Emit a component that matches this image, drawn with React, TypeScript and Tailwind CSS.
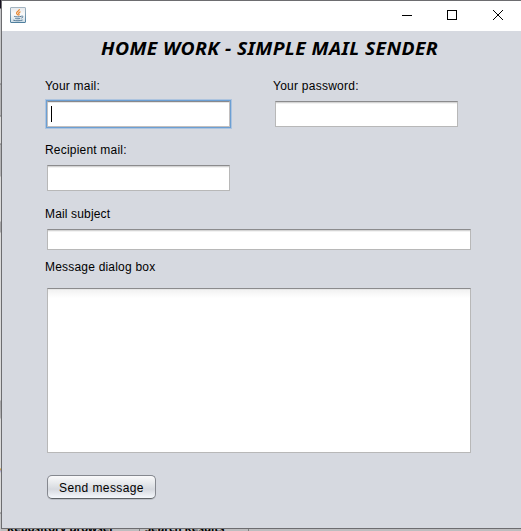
import type { ReactNode } from 'react';

function JavaIcon() {
  return (
    <svg width="16" height="16" viewBox="0 0 16 16" fill="none">
      <defs>
        <linearGradient id="tile" x1="0" y1="0" x2="0" y2="1">
          <stop offset="0" stopColor="#e6e9ec" />
          <stop offset="0.45" stopColor="#fafafa" />
          <stop offset="1" stopColor="#ccdce5" />
        </linearGradient>
        <linearGradient id="edge" x1="0" y1="0" x2="0" y2="1">
          <stop offset="0" stopColor="#a3b4c1" />
          <stop offset="1" stopColor="#4f7f9e" />
        </linearGradient>
      </defs>
      <rect x="0.5" y="0.5" width="15" height="15" rx="0.5" fill="url(#tile)" stroke="url(#edge)" />
      <path d="M9.3 2.2C9.8 4 6.2 4.6 6.6 6.3C6.8 7 7.7 7.3 7.7 8.2M10.5 4.8C8.8 5.4 8.2 6.2 9 7C9.4 7.5 9 8 8.5 8.5" stroke="#e98228" strokeWidth="1.2" />
      <path d="M4.2 9.4C6 10 9 10 11 9.4M5.3 11.4C7 11.9 9 11.9 10.2 11.4M3.3 13.2C6 14 10 14 12.6 13M11.2 9.2C13.6 8.6 13.5 10.6 11.3 11.1" stroke="#496f8e" strokeWidth="0.9" />
    </svg>
  );
}

function TitleBar() {
  return (
    <header className="flex h-[30px] shrink-0 items-start bg-white">
      <div className="ml-2 mt-1.5">
        <JavaIcon />
      </div>
      <svg className="ml-auto mr-[17px] mt-2" width="102" height="12" viewBox="0 0 102 12" fill="none" stroke="#000" shapeRendering="crispEdges">
        <path d="M0 6.5H10" />
        <rect x="45.5" y="1.5" width="9" height="9" />
        <path d="M91 1L101 11M101 1L91 11" shapeRendering="auto" />
      </svg>
    </header>
  );
}

function Label({ children, className }: { children: ReactNode; className: string }) {
  return <label className={`-ml-0.5 block h-4 whitespace-nowrap text-[12px] leading-[18px] ${className}`}>{children}</label>;
}

const field =
  'border border-[#b8b8b8] border-t-[#8b8b8d] bg-white shadow-[inset_0_1px_0_#d4d4d4,inset_0_2px_0_#f2f2f2]';

export default function App() {
  return (
    <div className="relative flex h-[531px] w-[521px] flex-col overflow-hidden bg-[#bdbdbf] font-['Liberation_Sans',Arial,sans-serif] text-black">
      <div className="absolute left-0 top-0 h-[531px] w-px bg-[linear-gradient(to_bottom,#171220_0px,#171220_8px,#c5c6c8_9px,#c5c6c8_83px,#77787a_84px,#b4b4b6_85px,#b4b4b6_115px,#77787a_116px,#dadada_117px,#dadada_143px,#77787a_144px,#b4b4b6_145px,#b4b4b6_176px,#dadada_177px,#dadada_221px,#a5a5a7_222px,#a5a5a7_232px,#dadada_233px,#dadada_400px,#a5a5a7_401px,#b4b4b6_418px,#dadada_419px,#dadada_468px,#d5a12c_469px,#a9a4d0_471px,#dadada_473px,#dadada_512px,#77787a_513px,#c5c6c8_514px)]" />
      <section className="ml-px flex h-[529px] w-[520px] shrink-0 flex-col border-y border-l border-[#6d6d70]">
        <TitleBar />
        <main className="grow bg-[#d6d9e0] pl-[45px]">
          <h1 className="ml-[54px] h-[46px] w-[320px] origin-left scale-x-[1.073] whitespace-nowrap pt-[6px] font-['Noto_Sans',sans-serif] text-[18px] font-bold italic leading-[22px] tracking-[0.35px]">
            HOME WORK - SIMPLE MAIL SENDER
          </h1>
          <div className="flex h-[50px] gap-[45px]">
            <div className="w-[183px]">
              <Label className="tracking-[0.2px]">Your mail:</Label>
              <div className="mt-2 h-[26px] border border-[#c2bfbf] border-t-[#89898c] bg-white pl-[3px] pt-1 shadow-[inset_0_1px_0_#e6e6e6,0_0_0_1px_#6c9fd3,0_0_0_2px_#adc4df]">
                <div className="h-4 w-px bg-black" />
              </div>
            </div>
            <div className="w-[183px]">
              <Label className="tracking-[0.25px]">Your password:</Label>
              <div className={`mt-2 h-[26px] ${field}`} />
            </div>
          </div>
          <Label className="mt-[14px] tracking-[0.2px]">Recipient mail:</Label>
          <div className={`mt-2 h-[26px] w-[183px] ${field}`} />
          <Label className="mt-[14px] tracking-[0.15px]">Mail subject</Label>
          <div className={`mt-2 h-[21px] w-[424px] ${field}`} />
          <Label className="mt-[8px] tracking-[0.2px]">Message dialog box</Label>
          <div className="mt-[14px] h-[165px] w-[424px] border border-[#b8b8b8] border-t-[#8b8b8d] bg-[linear-gradient(to_bottom,#dedede_0px,#f2f2f2_1px,#ffffff_9px)]" />
          <button className="mt-[22px] flex h-6 w-[109px] items-center justify-center whitespace-nowrap rounded-[5px] border border-[#85888f] border-b-[#5f6367] bg-[linear-gradient(to_bottom,#fafafb,#dfe2e6_45%,#d6d9df_60%,#f5f8fc)] pt-px text-[12px] tracking-[0.4px] shadow-[0_1px_0_#bcc0c7]">
            Send message
          </button>
        </main>
      </section>
      <footer className="ml-px h-[2px] w-[520px] overflow-hidden font-['Noto_Sans',sans-serif] text-[11px] font-bold leading-3">
        <div className="-mt-[7px] flex h-3">
          <span className="w-[139px] overflow-hidden whitespace-nowrap border-r border-[#808080] pl-1.5">Repository Browser</span>
          <span className="w-[109px] overflow-hidden whitespace-nowrap border-r border-[#808080] pl-[5px]">Search Results</span>
        </div>
      </footer>
    </div>
  );
}
